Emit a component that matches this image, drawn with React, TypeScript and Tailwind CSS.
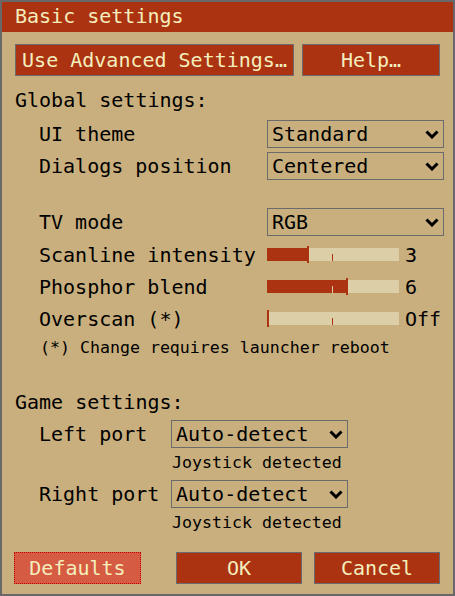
import React from "react";

const font = { fontFamily: '"DejaVu Sans Mono", "Liberation Mono", monospace' };

const Chevron = () => (
  <svg width="14" height="9" viewBox="0 0 14 9" className="shrink-0">
    <polyline points="1.5,1.5 7,7 12.5,1.5" fill="none" stroke="#000" strokeWidth="3" />
  </svg>
);

const Dropdown = ({ value }: { value: string }) => (
  <div className="flex items-center justify-between w-[177px] h-[28px] border border-[#6b6b6b] pl-[4px] pr-[4px]">
    <span>{value}</span>
    <Chevron />
  </div>
);

const Slider = ({ value, max, text }: { value: number; max: number; text: string }) => {
  const fill = Math.round((value / max) * 132);
  return (
    <div className="flex items-center">
      <div className="relative w-[132px] h-[13px] bg-[#dccfa8]">
        <div className="absolute left-0 top-0 h-[13px] bg-[#ab3311]" style={{ width: fill }} />
        {/* centre tick */}
        <div
          className={
            "absolute left-[65px] bottom-0 w-[1px] h-[7px] " +
            (fill > 66 ? "bg-[#dccfa8]" : "bg-[#ab3311]")
          }
        />
        {/* handle */}
        <div className="absolute top-[-2px] w-[2px] h-[17px] bg-[#ab3311]" style={{ left: fill }} />
      </div>
      <span className="ml-[6px]">{text}</span>
    </div>
  );
};

const SettingRow = ({ label, children, className = "" }: { label: string; children: React.ReactNode; className?: string }) => (
  <div className={"flex items-center pl-[37px] " + className}>
    <span className="w-[228px] shrink-0 whitespace-pre">{label}</span>
    {children}
  </div>
);

const PortRow = ({ label, className = "" }: { label: string; className?: string }) => (
  <div className={"flex items-center pl-[37px] h-[28px] " + className}>
    <span className="w-[132px] shrink-0 whitespace-pre">{label}</span>
    <Dropdown value="Auto-detect" />
  </div>
);

const RedButton = ({ label, className = "" }: { label: string; className?: string }) => (
  <div
    className={
      "flex items-center justify-center h-[32px] border border-[#6b6b6b] bg-[#ab3311] text-[#f4eebd] whitespace-pre " +
      className
    }
  >
    {label}
  </div>
);

export default function App() {
  return (
    <div
      className="w-[455px] h-[596px] border-2 border-[#686868] bg-[#c9af7e] flex flex-col text-[20px] leading-[20px] text-black"
      style={font}
    >
      {/* Title */}
      <div className="h-[30px] shrink-0 bg-[#ab3311] text-[#f4eebd] pl-[13px] leading-[28px]">Basic settings</div>

      {/* Top buttons */}
      <div className="flex mt-[12px] pl-[13px] gap-[8px]">
        <RedButton label="Use Advanced Settings…" className="w-[279px]" />
        <RedButton label="Help…" className="w-[138px]" />
      </div>

      <div className="mt-[14px] h-[20px] pl-[13px] flex items-center">Global settings:</div>

      <SettingRow label="UI theme" className="mt-[10px] h-[28px]">
        <Dropdown value="Standard" />
      </SettingRow>
      <SettingRow label="Dialogs position" className="mt-[4px] h-[28px]">
        <Dropdown value="Centered" />
      </SettingRow>

      <SettingRow label="TV mode" className="mt-[28px] h-[28px]">
        <Dropdown value="RGB" />
      </SettingRow>
      <SettingRow label="Scanline intensity" className="mt-[10px] h-[17px]">
        <Slider value={3} max={10} text="3" />
      </SettingRow>
      <SettingRow label="Phosphor blend" className="mt-[15px] h-[17px]">
        <Slider value={6} max={10} text="6" />
      </SettingRow>
      <SettingRow label="Overscan (*)" className="mt-[15px] h-[17px]">
        <Slider value={0} max={10} text="Off" />
      </SettingRow>

      <div className="mt-[12px] h-[18px] pl-[38px] flex items-center text-[16.6px] leading-[18px] whitespace-pre">
        (*) Change requires launcher reboot
      </div>

      <div className="mt-[35px] h-[20px] pl-[13px] flex items-center">Game settings:</div>

      <PortRow label="Left port" className="mt-[8px]" />
      <div className="mt-[6px] h-[18px] pl-[170px] flex items-center text-[16.6px] leading-[18px]">Joystick detected</div>
      <PortRow label="Right port" className="mt-[8px]" />
      <div className="mt-[6px] h-[18px] pl-[170px] flex items-center text-[16.6px] leading-[18px]">Joystick detected</div>

      {/* Bottom buttons */}
      <div className="mt-auto mb-[10px] flex pl-[12px]">
        <div className="flex items-center justify-center w-[127px] h-[32px] border border-dotted border-[#c40000] bg-[#d55c42] text-[#f4eebd]">
          Defaults
        </div>
        <RedButton label="OK" className="w-[126px] ml-[35px]" />
        <RedButton label="Cancel" className="w-[126px] ml-[12px]" />
      </div>
    </div>
  );
}
